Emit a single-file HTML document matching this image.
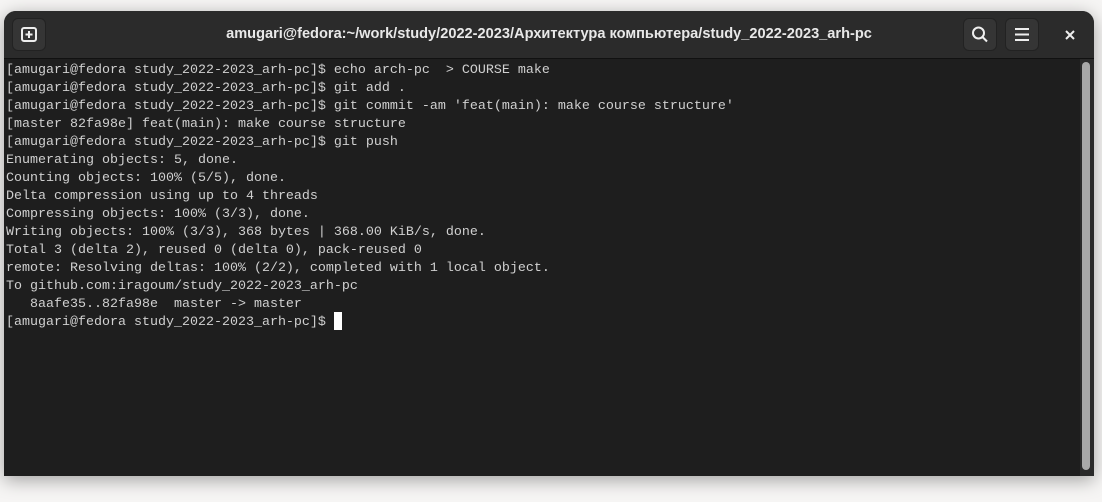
<!DOCTYPE html>
<html><head><meta charset="utf-8"><style>
html,body{margin:0;padding:0;width:1102px;height:502px;overflow:hidden;background:#f6f5f4;font-family:"Liberation Sans",sans-serif}
.win{position:absolute;left:4px;top:11px;width:1090px;height:465px;background:#1e1e1e;border-radius:12px 12px 0 0;box-shadow:0 4px 18px rgba(0,0,0,.35);overflow:hidden}
.hdr{position:absolute;left:0;top:0;width:1090px;height:47px;background:#2b2b2b;border-bottom:1px solid #111}
.title{position:absolute;left:0;right:0;top:15px;text-align:center;color:#e8e8e8;font-weight:bold;font-size:14.6px}
.btn{position:absolute;top:7px;width:34px;height:33px;background:#353535;border-radius:6px;border:1px solid #222;box-sizing:border-box}
.term{position:absolute;left:2px;top:51px;font-family:"Liberation Mono",monospace;font-size:13.33px;line-height:18px;color:#d0d0d0;white-space:pre}
.cur{position:absolute;left:330px;top:301px;width:8px;height:18px;background:#fff}
.sb{position:absolute;left:1076px;top:48px;width:14px;height:417px;background:#2a2a2a}
.th{position:absolute;left:2px;top:3px;width:8px;height:408px;background:#a8a8a8;border-radius:4px}
</style></head><body>
<div class="win">
<div class="hdr">
<div class="btn" style="left:8px"><svg width="34" height="33" style="position:absolute;left:-1px;top:-1px"><rect x="10" y="10" width="14" height="13" rx="2" fill="none" stroke="#eee" stroke-width="2"/><path d="M17 13v7M13.5 16.5h7" stroke="#eee" stroke-width="2"/></svg></div>
<div class="title">amugari@fedora:~/work/study/2022-2023/Архитектура компьютера/study_2022-2023_arh-pc</div>
<div class="btn" style="left:959px"><svg width="34" height="33" style="position:absolute;left:-1px;top:-1px"><circle cx="15.5" cy="15" r="5.5" fill="none" stroke="#eee" stroke-width="2"/><path d="M19.5 19l4.5 4.5" stroke="#eee" stroke-width="2"/></svg></div>
<div class="btn" style="left:1001px"><svg width="34" height="33" style="position:absolute;left:-1px;top:-1px"><path d="M10 11h14M10 16.5h14M10 22h14" stroke="#eee" stroke-width="2"/></svg></div>
<svg width="12" height="12" style="position:absolute;left:1060px;top:18px"><path d="M2 2l8 8M10 2l-8 8" stroke="#eee" stroke-width="2"/></svg>
</div>
<div class="term">[amugari@fedora study_2022-2023_arh-pc]$ echo arch-pc  > COURSE make
[amugari@fedora study_2022-2023_arh-pc]$ git add .
[amugari@fedora study_2022-2023_arh-pc]$ git commit -am 'feat(main): make course structure'
[master 82fa98e] feat(main): make course structure
[amugari@fedora study_2022-2023_arh-pc]$ git push
Enumerating objects: 5, done.
Counting objects: 100% (5/5), done.
Delta compression using up to 4 threads
Compressing objects: 100% (3/3), done.
Writing objects: 100% (3/3), 368 bytes | 368.00 KiB/s, done.
Total 3 (delta 2), reused 0 (delta 0), pack-reused 0
remote: Resolving deltas: 100% (2/2), completed with 1 local object.
To github.com:iragoum/study_2022-2023_arh-pc
   8aafe35..82fa98e  master -> master
[amugari@fedora study_2022-2023_arh-pc]$ </div>
<div class="cur"></div>
<div class="sb"><div class="th"></div></div>
</div>
</body></html>
